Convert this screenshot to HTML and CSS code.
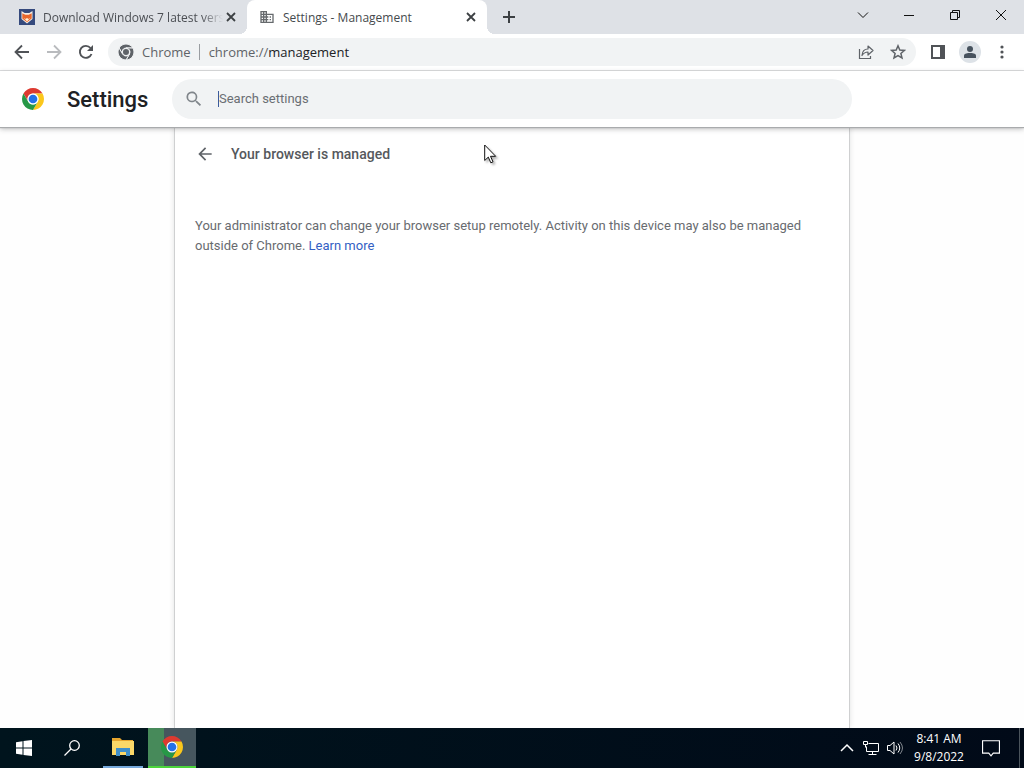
FILE: index.html
```html
<!DOCTYPE html>
<html lang="en">
<head>
<meta charset="utf-8">
<meta name="viewport" content="width=device-width, initial-scale=1">
<title>Settings - Management</title>
<link rel="stylesheet" href="styles.css">
</head>
<body>
<svg class="sprite" aria-hidden="true">
  <symbol id="chrome-logo" viewBox="0 0 48 48">
    <path fill="#dd3a30" d="M3.22 12A24 24 0 0 1 44.78 12H24A12 12 0 0 0 13.61 30Z"/>
    <path fill="#fbc71c" d="M44.78 12A24 24 0 0 1 24 48L34.39 30A12 12 0 0 0 24 12Z"/>
    <path fill="#279847" d="M24 48A24 24 0 0 1 3.22 12L13.61 30A12 12 0 0 0 34.39 30Z"/>
    <circle cx="24" cy="24" r="12" fill="#fff"/>
    <circle cx="24" cy="24" r="9.5" fill="#2471e7"/>
  </symbol>
  <symbol id="arrow-back" viewBox="0 0 24 24"><path d="M20 11H7.8l5.6-5.6L12 4l-8 8 8 8 1.4-1.4L7.8 13H20z"/></symbol>
  <symbol id="close" viewBox="0 0 10 10"><path d="M1 1l8 8M9 1L1 9" fill="none" stroke="currentColor" stroke-width="1.8"/></symbol>
</svg>

<header class="tabstrip">
  <div class="tabs">
    <div class="tab">
      <svg class="tab-icon" viewBox="0 0 16 16"><path fill="#354a7d" d="M0 0h16v16H0z"/><path fill="#f4eee5" d="M2.5 2l3.2 2h4.6l3.2-2v8L8 14.5 2.5 10z"/><path fill="#e8672c" d="M3.3 4.2l3 1.6h3.4l3-1.6v5.3L8 13.2 3.3 9.5z"/><path fill="#fff0d9" d="M4.5 8.5L6.5 10 8 9l1.5 1 2-1.5L8 12.5z"/></svg>
      <span class="tab-title tab-title-fade">Download Windows 7 latest vers</span>
      <button class="tab-close" aria-label="Close tab"><svg viewBox="0 0 10 10"><use href="#close"/></svg></button>
    </div>
    <div class="tab tab-active">
      <svg class="tab-icon" viewBox="0 0 24 24" fill="#666a6d"><path d="M12 7V3H2v18h20V7zM6 19H4v-2h2zm0-4H4v-2h2zm0-4H4V9h2zm0-4H4V5h2zm4 12H8v-2h2zm0-4H8v-2h2zm0-4H8V9h2zm0-4H8V5h2zm10 12h-8v-2h2v-2h-2v-2h2v-2h-2V9h8zm-2-8h-2v2h2zm0 4h-2v2h2z"/></svg>
      <span class="tab-title">Settings - Management</span>
      <button class="tab-close" aria-label="Close tab"><svg viewBox="0 0 10 10"><use href="#close"/></svg></button>
    </div>
    <button class="new-tab" aria-label="New tab"><svg viewBox="0 0 12 12"><path d="M6 0v12M0 6h12" stroke="currentColor" stroke-width="2"/></svg></button>
  </div>
  <div class="window-controls">
    <button aria-label="Search tabs"><svg viewBox="0 0 12 12"><path d="M1 3.5l5 5 5-5"/></svg></button>
    <button aria-label="Minimize"><svg viewBox="0 0 12 12"><path d="M1 6.5h10"/></svg></button>
    <button aria-label="Restore"><svg viewBox="0 0 12 12"><path d="M1.5 3.5h7v7h-7zM3.5 3.5v-2h7v7h-2"/></svg></button>
    <button aria-label="Close"><svg viewBox="0 0 12 12"><path d="M1 1l10 10M11 1L1 11"/></svg></button>
  </div>
</header>

<nav class="toolbar">
  <button class="tool" aria-label="Back"><svg class="icon-nav" viewBox="0 0 16 16"><path d="M15 8H2M8 1.5L1.5 8 8 14.5" fill="none" stroke="currentColor" stroke-width="1.8"/></svg></button>
  <button class="tool tool-off" aria-label="Forward" disabled><svg class="icon-nav" viewBox="0 0 16 16"><path d="M1 8h13M8 1.5L14.5 8 8 14.5" fill="none" stroke="currentColor" stroke-width="1.8"/></svg></button>
  <button class="tool" aria-label="Reload"><svg class="icon-nav" viewBox="0 0 16 16"><path d="M13.5 10A6 6 0 1 1 12.5 4" fill="none" stroke="currentColor" stroke-width="1.9"/><path d="M15 1v6H9z"/></svg></button>
  <div class="omnibox">
    <svg class="site-icon" viewBox="0 0 48 48" fill="#5f6368" stroke="#f1f3f4" stroke-width="3"><path d="M3.22 12A24 24 0 0 1 44.78 12H24A12 12 0 0 0 13.61 30Z"/><path d="M44.78 12A24 24 0 0 1 24 48L34.39 30A12 12 0 0 0 24 12Z"/><path d="M24 48A24 24 0 0 1 3.22 12L13.61 30A12 12 0 0 0 34.39 30Z"/><circle cx="24" cy="24" r="9" stroke="none"/></svg>
    <span class="site-label">Chrome</span>
    <span class="url">chrome://<b>management</b></span>
    <button class="omni-button" aria-label="Share"><svg viewBox="0 0 16 16" fill="none" stroke="currentColor" stroke-width="1.2"><path d="M1.5 5v9.5h11V12"/><path d="M4 11.5C4.3 7 6.5 5 10 5V2l5 4.5-5 4.5V8C7.500 8 5.700 9 4 11.500z" stroke-linejoin="round"/></svg></button>
    <button class="omni-button" aria-label="Bookmark this tab"><svg viewBox="0 0 16 16"><path d="M8 1.800l1.800 4.200 4.600.4-3.500 3 1.100 4.500L8 11.500l-4 2.400 1.100-4.500-3.500-3L6.200 6z" fill="none" stroke="currentColor" stroke-width="1.500"/></svg></button>
  </div>
  <div class="tool-group">
    <button class="tool" aria-label="Side panel"><svg class="icon-panel" viewBox="0 0 14 14"><path fill-rule="evenodd" d="M0 0h14v14H0zM2 2v10h7V2z"/></svg></button>
    <button class="tool" aria-label="Profile"><span class="avatar"><svg viewBox="0 0 12 12"><circle cx="6" cy="3" r="3"/><path d="M0 12V9.500C0 7.500 4 7 6 7s6 .5 6 2.500V12z"/></svg></span></button>
    <button class="tool" aria-label="Menu"><svg class="icon-nav" viewBox="0 0 16 16"><circle cx="8" cy="3" r="1.600"/><circle cx="8" cy="8" r="1.600"/><circle cx="8" cy="13" r="1.600"/></svg></button>
  </div>
</nav>

<div class="settings-header">
  <div class="brand">
    <svg class="brand-logo" aria-hidden="true"><use href="#chrome-logo"/></svg>
    <h1>Settings</h1>
  </div>
  <label class="search">
    <svg viewBox="0 0 24 24" fill="#80868b" aria-hidden="true"><path d="M15.5 14h-.8l-.3-.3A6.500 6.500 0 1 0 13.700 14.400l.3.3v.8l5 5 1.500-1.500zm-6 0a4.500 4.500 0 1 1 0-9 4.500 4.500 0 0 1 0 9z"/></svg>
    <span class="caret"></span>
    <input type="search" placeholder="Search settings" aria-label="Search settings">
  </label>
  <div class="brand-balance"></div>
</div>

<main class="page">
  <section class="panel">
    <div class="panel-head">
      <button class="panel-back" aria-label="Back"><svg><use href="#arrow-back"/></svg></button>
      <h2>Your browser is managed</h2>
    </div>
    <p class="notice">Your administrator can change your browser setup remotely. Activity on this device may also be managed outside of Chrome. <a href="#">Learn more</a></p>
  </section>
</main>

<footer class="taskbar">
  <div class="task-start">
    <button aria-label="Start"><svg class="icon-start" viewBox="0 0 16 16" fill="#fff"><path d="M0 2.300l6.500-1v6.200H0zM7.500 1.100L16 0v7.500H7.500zM0 8.500h6.500v6.200l-6.500-1zM7.500 8.500H16V16l-8.500-1.100z"/></svg></button>
    <button aria-label="Search"><svg class="icon-start" viewBox="0 0 16 16" fill="none" stroke="#fff" stroke-width="1.300"><circle cx="10.500" cy="5.500" r="4.800"/><path d="M7 9L.5 15.500"/></svg></button>
  </div>
  <div class="task-apps">
    <button class="task-open" aria-label="File Explorer"><svg class="icon-app" viewBox="0 0 22 18"><path fill="#e7a62e" d="M0 0h8l2 2h11v4H0z"/><path fill="#fbd868" d="M0 3h22v14H0z"/><path fill="#3f8fca" d="M4 10h14v8h-4v-4H8v4H4z"/></svg></button>
    <button class="task-current" aria-label="Google Chrome"><svg class="icon-app"><use href="#chrome-logo"/></svg></button>
  </div>
  <div class="tray">
    <button aria-label="Hidden icons"><svg viewBox="0 0 16 16"><path d="M2 11l6-6 6 6" stroke-width="1.500"/></svg></button>
    <button aria-label="Network"><svg viewBox="0 0 16 16"><path d="M5.500 3.500h10v8H3.500V6.500M9.500 11.500v3M5.500 14.500h8M.5 1.500h4v3h-4zM2.500 4.500v3"/></svg></button>
    <button aria-label="Volume"><svg viewBox="0 0 16 16"><path d="M.5 5.500h2.500l4-3.500v12l-4-3.500H.5zM9 5.500q2 2.500 0 5M11 3.500q3.500 4.500 0 9"/><path d="M13 2q5 6 0 12" opacity=".5"/></svg></button>
    <time class="clock" datetime="2022-09-08T08:41"><span>8:41 AM</span><span>9/8/2022</span></time>
    <button class="notifications" aria-label="Notifications"><svg viewBox="0 0 16 16"><path d="M.5 1.500h15v11H10L8 15l-2-2.500H.5z"/></svg></button>
    <span class="desktop-edge"></span>
  </div>
</footer>

<svg class="pointer" viewBox="0 0 13 20" aria-hidden="true"><path d="M.7 1v15.500l3.600-3.400 2.500 5.700 2.200-1-2.500-5.500h5.200z" fill="#fff" stroke="#111"/></svg>
</body>
</html>
```
FILE: styles.css
```css
* {
  box-sizing: border-box;
}

body {
  margin: 0;
  min-height: 100vh;
  display: flex;
  flex-direction: column;
  background: #fff;
  font-family: Roboto, Arial, sans-serif;
  color: #5f6368;
  fill: currentColor;
}

button {
  display: flex;
  align-items: center;
  justify-content: center;
  padding: 0;
  border: 0;
  background: none;
  color: inherit;
  font: inherit;
}

svg {
  display: block;
  flex: none;
}

.sprite {
  position: absolute;
  width: 0;
  height: 0;
}

/* Tab strip */
.tabstrip {
  display: flex;
  height: 34px;
  background: #dee1e6;
  font-family: "Segoe UI", "Open Sans", sans-serif;
  font-size: 12px;
}

.tabs {
  display: flex;
  flex: 1;
  min-width: 0;
  padding-left: 7px;
}

.tab {
  position: relative;
  display: flex;
  align-items: center;
  flex: 0 1 240px;
  min-width: 0;
  padding: 0 8px 0 12px;
  color: #4b4e53;
}

.tab-active {
  background: #fff;
  border-radius: 8px 8px 0 0;
  color: #45494d;
}

.tab-active::before,
.tab-active::after {
  content: "";
  position: absolute;
  bottom: 0;
  width: 8px;
  height: 8px;
}

.tab-active::before {
  right: 100%;
  background: radial-gradient(circle at 0 0, transparent 8px, #fff 8px);
}

.tab-active::after {
  left: 100%;
  background: radial-gradient(circle at 100% 0, transparent 8px, #fff 8px);
}

.tab-icon {
  width: 16px;
  height: 16px;
  margin-right: 8px;
}

.tab-title {
  flex: 1;
  min-width: 0;
  overflow: hidden;
  white-space: nowrap;
}

.tab-title-fade {
  mask-image: linear-gradient(to right, #000 88%, transparent);
}

.tab-close {
  width: 16px;
  height: 16px;
  color: #3c4043;
}

.tab-close svg {
  width: 10px;
  height: 10px;
}

.new-tab {
  width: 28px;
  margin-left: 8px;
  color: #3c4043;
}

.new-tab svg {
  width: 12px;
  height: 12px;
}

.window-controls {
  display: flex;
  height: 29px;
}

.window-controls button {
  width: 46px;
}

.window-controls svg {
  width: 12px;
  height: 12px;
  fill: none;
  stroke: #111;
}

/* Toolbar */
.toolbar {
  display: flex;
  align-items: center;
  height: 37px;
  padding: 0 6px;
  border-bottom: 1px solid #dcdddf;
  background: #fff;
  font-family: "Segoe UI", "Open Sans", sans-serif;
  font-size: 13px;
}

.tool {
  width: 32px;
  height: 32px;
  color: #505357;
}

.tool-off {
  color: #b9bbbe;
}

.icon-nav {
  width: 16px;
  height: 16px;
}

.omnibox {
  display: flex;
  align-items: center;
  flex: 1;
  min-width: 0;
  height: 28px;
  margin-left: 6px;
  padding: 0 2px 0 10px;
  border-radius: 14px;
  background: #f1f3f4;
}

.site-icon {
  width: 16px;
  height: 16px;
}

.site-label {
  margin-left: 8px;
  padding-right: 8px;
  border-right: 1px solid #9a9da1;
  line-height: 16px;
}

.url {
  flex: 1;
  min-width: 0;
  padding-left: 9px;
  overflow: hidden;
  white-space: nowrap;
}

.url b {
  font-weight: 400;
  color: #202124;
}

.omni-button {
  width: 32px;
  height: 28px;
}

.omni-button svg {
  width: 16px;
  height: 16px;
}

.tool-group {
  display: flex;
  margin-left: 6px;
}

.icon-panel {
  width: 14px;
  height: 14px;
}

.avatar {
  display: grid;
  place-items: center;
  width: 22px;
  height: 22px;
  border-radius: 50%;
  background: #dde2e7;
  color: #47525e;
}

.avatar svg {
  width: 12px;
  height: 12px;
}

/* Settings header */
.settings-header {
  position: relative;
  display: flex;
  align-items: center;
  height: 56px;
  background: #fff;
  box-shadow: 0 1px 1px #a9abad, 0 2px 5px rgba(60, 64, 67, 0.35);
}

.brand,
.brand-balance {
  flex: 1;
}

.brand {
  display: flex;
  align-items: center;
  gap: 23px;
}

.brand-logo {
  width: 22px;
  height: 22px;
  margin-left: 22px;
}

.brand h1 {
  margin: 0;
  font-size: 22px;
  font-weight: 500;
  color: #202124;
}

.search {
  display: flex;
  align-items: center;
  flex: 0 1 680px;
  height: 40px;
  padding: 0 12px;
  border-radius: 20px;
  background: #f1f3f4;
}

.search svg {
  width: 20px;
  height: 20px;
}

.caret {
  width: 1px;
  height: 16px;
  margin-left: 14px;
  background: #3c5b9b;
}

.search input {
  flex: 1;
  min-width: 0;
  padding: 0 0 2px;
  border: 0;
  outline: 0;
  background: none;
  font: 13px Roboto, sans-serif;
  color: #202124;
}

.search input::placeholder {
  color: #6a6e73;
  opacity: 1;
}

/* Page */
.page {
  flex: 1;
  display: flex;
  justify-content: center;
  background: #fefefe;
}

.panel {
  flex: 0 1 676px;
  padding: 0 20px;
  border: solid #cfd0d1;
  border-width: 0 1px;
  background: #fff;
  box-shadow: 0 0 5px rgba(60, 64, 67, 0.15);
}

.panel-head {
  display: flex;
  align-items: center;
  gap: 16px;
  height: 54px;
}

.panel-back {
  width: 20px;
  height: 20px;
}

.panel-back svg {
  width: 20px;
  height: 20px;
}

.panel-head h2 {
  margin: 0;
  font-size: 14px;
  font-weight: 500;
  color: #55585c;
}

.notice {
  margin: 35px 0 0;
  font-size: 13px;
  line-height: 20px;
  color: #686b6f;
}

.notice a {
  color: #3360c4;
  text-decoration: none;
}

/* Taskbar */
.taskbar {
  display: flex;
  justify-content: space-between;
  height: 40px;
  background: linear-gradient(to right, #00141d, #010a18);
  color: #fff;
  font-family: "Segoe UI", "Open Sans", sans-serif;
  font-size: 12px;
}

.task-start,
.task-apps,
.tray {
  display: flex;
}

.task-start button {
  width: 48px;
}

.icon-start {
  width: 16px;
  height: 16px;
}

.task-apps {
  flex: 1;
  gap: 5px;
  padding-left: 7px;
}

.task-open {
  width: 40px;
  border-bottom: 2px solid #76a9dc;
}

.task-current {
  width: 48px;
  border-bottom: 2px solid #4bd43b;
  background: linear-gradient(to right, #478a5a 16px, #46565e 16px);
}

.icon-app {
  width: 22px;
  height: 22px;
}

.tray button {
  width: 24px;
}

.tray svg {
  width: 16px;
  height: 16px;
  fill: none;
  stroke: #fff;
}

.clock {
  display: flex;
  flex-direction: column;
  justify-content: center;
  align-items: center;
  width: 64px;
  line-height: 18px;
}

.tray .notifications {
  width: 40px;
}

.tray .notifications svg {
  width: 18px;
  height: 18px;
}

.desktop-edge {
  width: 5px;
  margin-left: 8px;
  border-left: 1px solid #4b545c;
}

/* Mouse pointer lying over the page */
.pointer {
  position: absolute;
  left: 484px;
  top: 144px;
  width: 13px;
  height: 20px;
  filter: drop-shadow(2px 2px 1px rgba(0, 0, 0, 0.3));
}
```
